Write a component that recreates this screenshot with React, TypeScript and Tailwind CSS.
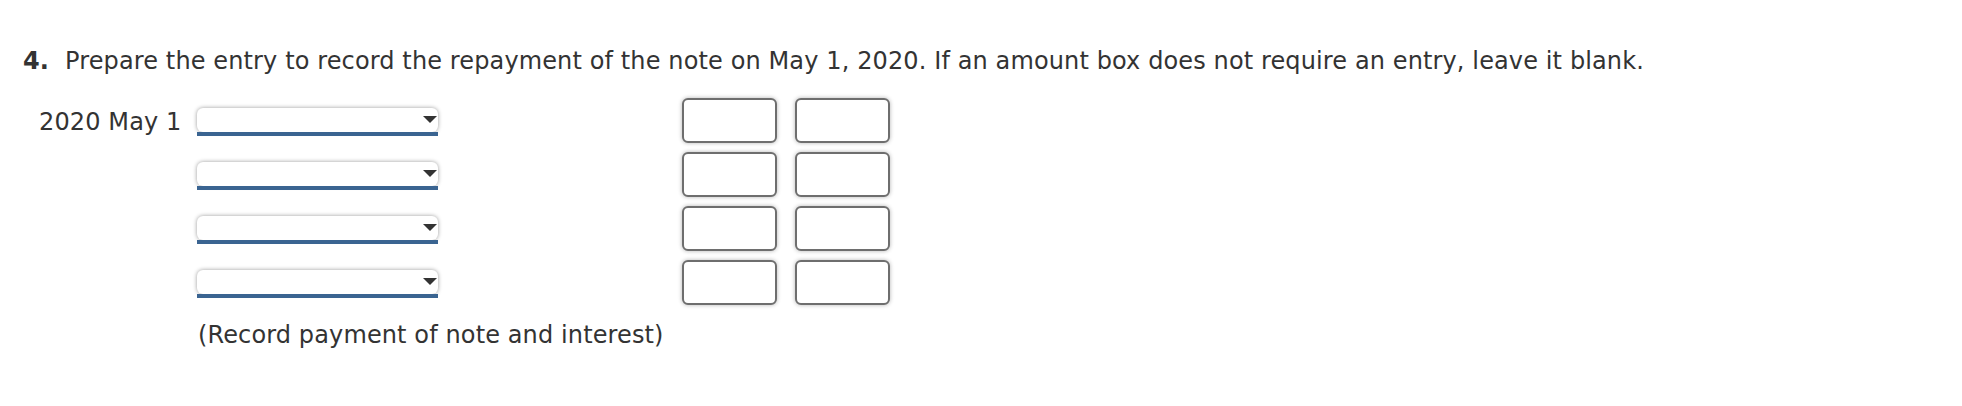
const rows = [0, 1, 2, 3];

const AccountSelect = () => (
  <div className="relative mt-[3px] w-[241px]">
    <div className="h-[24px] rounded-[6px] bg-white shadow-[0_0_4px_rgba(0,0,0,0.4)]" />
    <div className="h-[4px] bg-[#3a6491]" />
    <svg
      className="absolute right-[1px] top-[8px]"
      width="14"
      height="7"
      viewBox="0 0 14 7"
    >
      <path d="M0 0 H14 L7 7 Z" fill="#333333" />
    </svg>
  </div>
);

const AmountBox = () => (
  <div className="h-[45px] w-[95px] rounded-[6px] border-2 border-[#6e6e6e] bg-white shadow-[0_0_4px_rgba(0,0,0,0.3)]" />
);

export default function App() {
  return (
    <div className="min-h-[406px] w-[1962px] bg-white font-['DejaVu_Sans',Verdana,sans-serif] text-[24px] leading-[28px] tracking-[0.12px] text-[#333333]">
      <p className="pl-[23px] pt-[47px]">
        <span className="mr-[16px] font-bold">4.</span>
        Prepare the entry to record the repayment of the note on May 1, 2020.
        If an amount box does not require an entry, leave it blank.
      </p>

      <div className="mt-[18px]">
        {rows.map((i) => (
          <div key={i} className="flex h-[54px] items-center">
            <div className="w-[197px] pl-[39px] pt-[3px]">
              {i === 0 ? "2020 May 1" : ""}
            </div>
            <AccountSelect />
            <div className="ml-[244px] flex gap-[18px]">
              <AmountBox />
              <AmountBox />
            </div>
          </div>
        ))}
      </div>

      <p className="mt-[12px] pl-[198px]">(Record payment of note and interest)</p>
    </div>
  );
}
